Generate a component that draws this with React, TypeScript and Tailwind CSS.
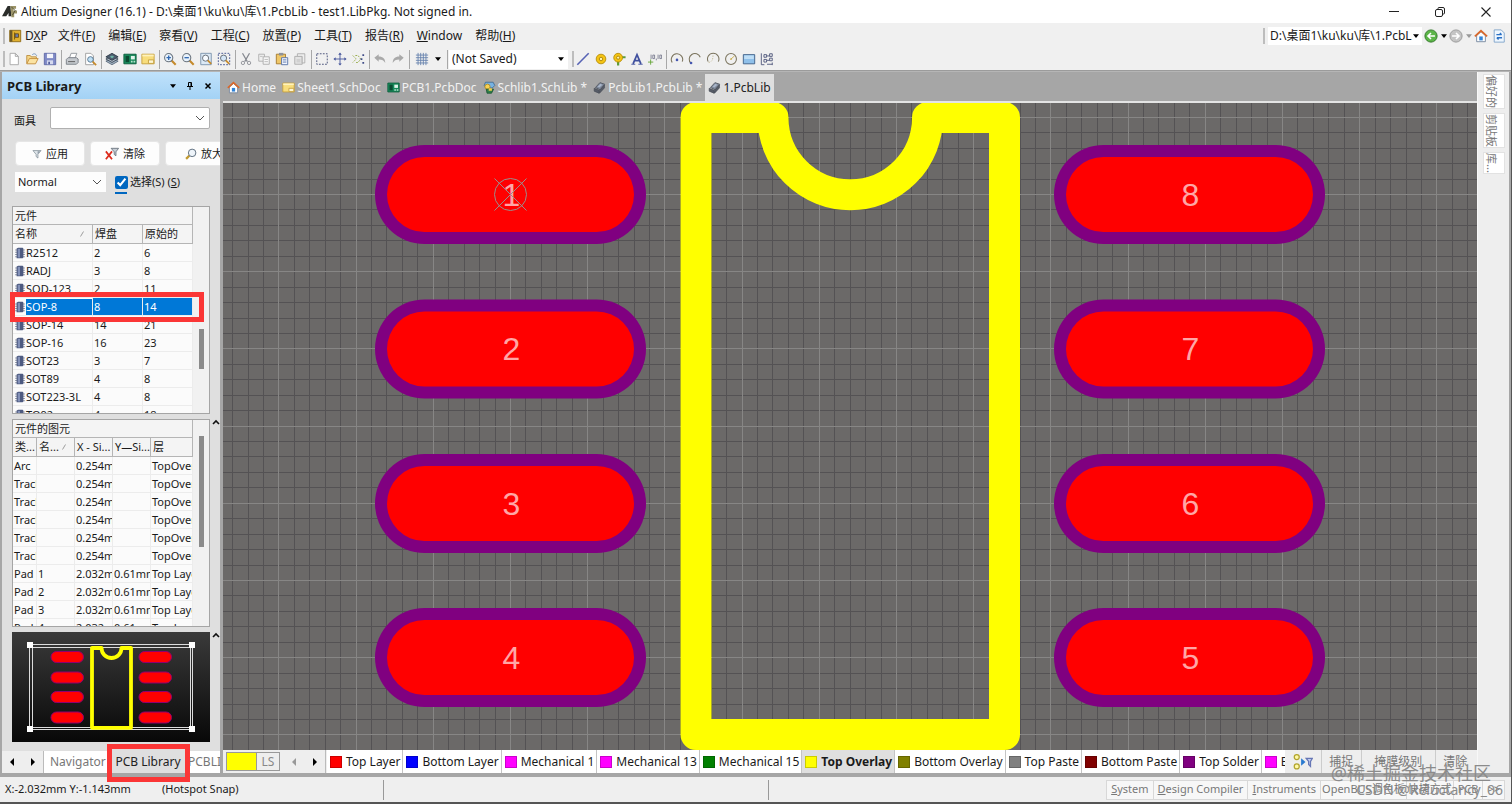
import { Fragment, useState } from "react";
import type { ReactNode } from "react";
import clsx from "clsx";

type IconName =
  | "new" | "open" | "save" | "print" | "preview" | "layers" | "pcb" | "sheet"
  | "zoomIn" | "zoomOut" | "zoomDoc" | "zoomArea" | "cut" | "copy" | "paste" | "stamp"
  | "select" | "move" | "deselect" | "undo" | "redo" | "grid"
  | "line" | "pad" | "via" | "text" | "coord" | "arc1" | "arc2" | "arc3" | "circle" | "fill" | "array"
  | "home" | "schlib" | "pcblib" | "dxp" | "logo" | "back" | "forward" | "refresh"
  | "funnel" | "clear" | "magnify" | "chip" | "mask";

const magnifier = (sign: ReactNode) => (
  <>
    <path d="M9.500 9.500l5 5" stroke="#c58a2c" strokeWidth="2.400" />
    <circle cx="6.500" cy="6.500" r="4.700" fill="#e8f2fb" stroke="#6b747e" strokeWidth="1.200" />
    {sign}
  </>
);

const ICONS: Record<IconName, ReactNode> = {
  new: <path d="M3.500 1.500h6l3.500 3.500v9.500H3.500z M9.500 1.500V5H13" fill="#fff" stroke="#a3a3a3" />,
  open: (
    <>
      <path d="M2 13V4h4l1 1.500h6V8" fill="#f5d687" stroke="#b98b3e" />
      <path d="M2 13.500l3-6h10l-3 6z" fill="#fbe3a2" stroke="#c28a37" />
      <path d="M8 3.500c2-2.500 4.500-1.500 5.500 1" stroke="#6d8fb8" />
    </>
  ),
  save: (
    <>
      <path d="M1.500 1.500h13v13h-13z" fill="#7f8ac6" stroke="#5d67a5" />
      <path d="M4.500 2h7v5h-7z" fill="#f3f4fb" />
      <path d="M4.500 9.500h7v4.500h-7z" fill="#d5d9ee" />
      <path d="M6 11h2v3H6z" fill="#555f9c" />
    </>
  ),
  print: (
    <>
      <path d="M5 7l2-5.500h6.500l-2 5.500z" fill="#fff" stroke="#8a8f96" />
      <path d="M1.500 8.500l2-2h9.500L15 8v4l-2 2H1.500z" fill="#c4c8cd" stroke="#767c84" />
      <path d="M3.500 11h8" stroke="#555" />
    </>
  ),
  preview: (
    <>
      <path d="M3 1.500h6l3 3v10H3z" fill="#fff" stroke="#9a9a9a" />
      <circle cx="8.500" cy="8.500" r="3.200" fill="#bfe0f5" stroke="#4e6f8c" />
      <path d="M11 11l4 4" stroke="#c58a2c" strokeWidth="2" />
    </>
  ),
  layers: (
    <>
      <path d="M1 10.500L8 14.500l7-4-7-4z" fill="#9fb0c1" stroke="#5b6a7a" />
      <path d="M1 8L8 12l7-4-7-4z" fill="#aab6c3" stroke="#3c4856" />
      <path d="M1 5.500L8 9.500l7-4-7-4z" fill="#4e5e70" stroke="#2e3946" />
      <path d="M5.500 5.500L8 4l2.500 1.500L8 7z" fill="#6fb6a8" />
    </>
  ),
  pcb: (
    <>
      <path d="M1 2.500h14v11H1z" fill="#17895a" stroke="#0c5c3b" />
      <path d="M3 4.500h4v7H3z" fill="#0b4a31" />
      <path d="M9 4.500h4.500v4H9z" fill="#dff3ea" />
      <path d="M9 10h2v2H9z M12 10h2v2h-2z" fill="#b6e3cd" />
    </>
  ),
  sheet: (
    <>
      <path d="M1 2.500h14v11H1z" fill="#f8dd7c" stroke="#c49d3a" />
      <path d="M1.500 3h13v2h-13z" fill="#fff2bd" />
      <path d="M8.500 9h6v4h-6z" fill="#fff6d2" stroke="#c49d3a" />
    </>
  ),
  zoomIn: magnifier(<path d="M4 6.500h5M6.500 4v5" stroke="#2f67b1" strokeWidth="1.500" />),
  zoomOut: magnifier(<path d="M4 6.500h5" stroke="#2f67b1" strokeWidth="1.500" />),
  zoomDoc: (
    <>
      <path d="M2 1.500h12v13H2z" fill="#dce9f5" stroke="#7790a9" />
      <circle cx="7.500" cy="7" r="3.500" fill="#f7fbff" stroke="#59616b" />
      <path d="M10 9.500l4 4" stroke="#c58a2c" strokeWidth="2" />
    </>
  ),
  zoomArea: (
    <>
      <path d="M1.500 1.500h13v13h-13z" stroke="#37498a" strokeDasharray="2 1.500" />
      <circle cx="7.500" cy="7" r="3.500" fill="#d4e6f7" stroke="#59616b" />
      <path d="M10 9.500l4 4" stroke="#c58a2c" strokeWidth="2" />
    </>
  ),
  cut: (
    <>
      <path d="M4 1.500l5.500 9.500M12 1.500L6.500 11" stroke="#85888f" strokeWidth="1.400" />
      <circle cx="4.500" cy="12.500" r="1.900" stroke="#8b8e95" />
      <circle cx="11.500" cy="12.500" r="1.900" stroke="#8b8e95" />
    </>
  ),
  copy: (
    <>
      <path d="M2 2.500h6.500v8H2z" fill="#f0f0f0" stroke="#aaa" />
      <path d="M7 5.500h7v8.500H7z" fill="#f7f7f7" stroke="#aaa" />
      <path d="M3.500 5h3M8.500 8.500h4M8.500 11h4" stroke="#b7b7b7" />
    </>
  ),
  paste: (
    <>
      <path d="M1.500 2.500h10.500v11H1.500z" fill="#efc768" stroke="#a2772a" />
      <path d="M4.500 1h5v3h-5z" fill="#8e9299" />
      <path d="M7.500 6.500h7v8h-7z" fill="#f2f6ff" stroke="#5470a6" />
      <path d="M9 9h4M9 11.500h4" stroke="#5470a6" />
    </>
  ),
  stamp: (
    <>
      <path d="M2 5h8.500v9H2z" fill="#e3e3e3" stroke="#aaa" />
      <path d="M5 2h8.500v10.500H10.500V5H5z" fill="#eee" stroke="#aaa" />
      <path d="M4 8h4.500v4H4z" fill="#d0d0d0" />
    </>
  ),
  select: <path d="M2 2h12v12H2z" stroke="#3c4570" strokeDasharray="2 1.500" />,
  move: (
    <>
      <path d="M8 2v12M2 8h12" stroke="#44549a" />
      <path d="M8 .5l2 2.500H6zM8 15.500l2-2.500H6zM.500 8L3 6v4zM15.500 8L13 6v4z" fill="#44549a" />
    </>
  ),
  deselect: (
    <>
      <path d="M2 4l4 4-4 4M5 4h3l3 4-3 4H5" stroke="#8fa53a" strokeDasharray="2 1.300" />
      <path d="M13 2.500h2v2h-2zM11 7h2v2h-2zM13 11.500h2v2h-2z" fill="#3f4c87" />
    </>
  ),
  undo: <path d="M1.500 6.500l5-4v2.500c5 0 7.500 2.500 7.500 7.500-1.500-2.800-3.500-4-7.500-4V11z" fill="#a9a9a9" />,
  redo: <path d="M14.500 6.500l-5-4v2.500C4.500 5 2 7.500 2 12.500c1.500-2.800 3.500-4 7.500-4V11z" fill="#a9a9a9" />,
  grid: <path d="M1 3.500h14M1 6.500h14M1 9.500h14M1 12.500h14M3.500 1v14M6.500 1v14M9.500 1v14M12.500 1v14" stroke="#6580ad" />,
  line: <path d="M1.500 14.500l13-13" stroke="#5763b5" strokeWidth="1.800" />,
  pad: (
    <>
      <circle cx="8" cy="8" r="5.500" fill="#f5c413" stroke="#b48c0a" />
      <circle cx="8" cy="8" r="2" fill="#fff2a8" stroke="#a88106" />
    </>
  ),
  via: (
    <>
      <path d="M10 6h5.500M7 9v6.500" stroke="#5b9b3c" strokeWidth="2.500" />
      <circle cx="7" cy="6.500" r="5" fill="#f5c413" stroke="#b48c0a" />
      <circle cx="7" cy="6.500" r="1.800" fill="#fff2a8" stroke="#a88106" />
    </>
  ),
  text: (
    <>
      <path d="M3.500 13.500L8 3l4.500 10.500M5.500 9.800h5" stroke="#41519f" strokeWidth="2" />
      <path d="M1.500 14h4.500M9.500 14h5" stroke="#41519f" />
    </>
  ),
  coord: (
    <>
      <path d="M0 11.500h6M3 8.500v6" stroke="#61a332" />
      <path d="M3.500 3v5M5.500 3.500h2v4h-2zM9.500 7.500v2M11.500 3v5M13.500 3.500h2v4h-2z" stroke="#5c6078" strokeWidth=".8" />
    </>
  ),
  arc1: (
    <>
      <path d="M2.500 12A6.500 6.500 0 1 1 14 11" stroke="#7b745e" strokeWidth="1.200" />
      <circle cx="8" cy="9" r="1.500" fill="#4557b0" />
    </>
  ),
  arc2: (
    <>
      <path d="M3.500 13A6.500 6.500 0 1 1 14 6" stroke="#7b745e" strokeWidth="1.200" />
      <circle cx="3.500" cy="12.500" r="1.500" fill="#4557b0" />
    </>
  ),
  arc3: (
    <>
      <path d="M2.500 11A6.500 6.500 0 1 1 14 11" stroke="#7b745e" strokeWidth="1.200" />
      <path d="M3 12c4-1 5-3 5-9" stroke="#c0b890" strokeDasharray="1.500 1.500" />
    </>
  ),
  circle: (
    <>
      <circle cx="8" cy="8" r="6.200" stroke="#7b745e" strokeWidth="1.200" />
      <path d="M8 8l4-3.500" stroke="#c7a944" />
      <circle cx="8" cy="8" r="1" fill="#c7a944" />
    </>
  ),
  fill: (
    <>
      <path d="M1.500 3h13v10.500h-13z" fill="#8fc0ea" stroke="#3c5b85" />
      <path d="M2.500 4h11v4h-11z" fill="#bfdef6" />
    </>
  ),
  array: (
    <path
      d="M1.500 1.500v13H5M4.500 3h3v3h-3zM11 2h3v3h-3zM4.500 8.500h3v3h-3zM11 7h3v3h-3zM8 14h6M8 4.500h3M8 9.500h3M14 12v3"
      stroke="#4a5278"
    />
  ),
  home: (
    <>
      <path d="M3 7.500L8 3l5 4.500V14.500H3z" fill="#fdfdfd" stroke="#71839b" />
      <path d="M6 8.500h4V13H6z" fill="#2f83d8" />
      <path d="M1 8.500L8 2l7 6.500" stroke="#d9682b" strokeWidth="2" />
    </>
  ),
  schlib: (
    <>
      <path d="M3 1.500h9.500l2 4-3 3H4L1.500 5.500z" fill="#77b3e3" stroke="#3c688d" />
      <circle cx="5.500" cy="7" r="3.200" fill="#f7d254" stroke="#a7811c" />
      <path d="M4 10h9l-2.500 5H5z" fill="#2e7f4b" stroke="#1c5430" />
      <path d="M7 9h4v3H7z" fill="#f0cf4c" />
    </>
  ),
  pcblib: (
    <>
      <path d="M3 8l5.500-6 6 2-5.500 7z" fill="#7e8899" stroke="#4b515c" />
      <path d="M1.500 9l6 2.500V15l-6-2.500zM8 11.500l6-6.500v3.500L8 15z" fill="#565c67" stroke="#4b505a" />
      <path d="M5.500 7l3.500-3.500 2.500 1L8 8z" fill="#a9b6ca" />
    </>
  ),
  dxp: (
    <>
      <path d="M2 1.500h12.500v13H2z" fill="#e0b030" stroke="#8b6814" />
      <path d="M2 1.500h3v13H2z" fill="#6d5a2a" />
      <path d="M7.500 4v8M8 5.500h4v4H8z" fill="#6b7bb0" stroke="#6b4e0b" />
    </>
  ),
  logo: (
    <>
      <path d="M0 13L6 2h3l1 11H7V9.500L4.500 13z" fill="#2b2d2a" />
      <path d="M9 2h6v3h-3v2h4v3h-3v4h-3" fill="#9c9468" />
      <path d="M10 3l4 4-3 5" stroke="#525034" />
    </>
  ),
  back: (
    <>
      <circle cx="8" cy="8" r="7" fill="#5cb548" stroke="#2e7426" />
      <path d="M12.500 8H5M8 4.500L4.500 8 8 11.500" stroke="#fff" strokeWidth="1.800" />
    </>
  ),
  forward: (
    <>
      <circle cx="8" cy="8" r="7" fill="#c4c4c4" stroke="#969696" />
      <path d="M3.500 8H11M8 4.500L11.500 8 8 11.500" stroke="#fff" strokeWidth="1.800" />
    </>
  ),
  refresh: (
    <>
      <path d="M2.500 1h8l3.500 3.500V15H2.500z" fill="#eef6fe" stroke="#7ba0c7" />
      <path d="M5 6.500h6M9 4.500l2 2M11.500 10h-6M7.500 12l-2-2" stroke="#2a70c4" strokeWidth="1.500" />
    </>
  ),
  funnel: (
    <>
      <path d="M1.500 2.500h13L9.500 8.500V14.500L6.500 12V8.500z" fill="#dfe5ea" stroke="#6d7b87" />
      <path d="M9 3.500h4L9 8z" fill="#8d99a5" />
    </>
  ),
  clear: (
    <>
      <path d="M7 1.500h8.500L12.500 5.500V10l-2-1.500v-3z" fill="#c6ccd4" stroke="#68727d" />
      <path d="M1 5l7 9M8 5l-7 9" stroke="#dc2b1d" strokeWidth="2" />
    </>
  ),
  magnify: (
    <>
      <path d="M6 10l-4.500 4.500" stroke="#c29a30" strokeWidth="3" />
      <circle cx="9.500" cy="6.500" r="5" fill="#eef4fa" stroke="#5f6f80" strokeWidth="1.300" />
    </>
  ),
  chip: (
    <>
      <path d="M1.500 4h13M1.500 7h13M1.500 10h13M1.500 13h13" stroke="#8f94a3" strokeWidth="1.500" />
      <path d="M3.500 2l2-1h6l1 1v12l-1 1h-8z" fill="#4d5a80" />
      <path d="M5 2.500h3v11.500H5z" fill="#8391b8" />
    </>
  ),
  mask: (
    <>
      <circle cx="3" cy="4" r="2" fill="#fff9a6" stroke="#b1a42c" />
      <circle cx="3" cy="11.500" r="2" fill="#fff9a6" stroke="#b1a42c" />
      <path d="M6.500 5l3.500 3-3.500 3z" fill="#2a7ad0" />
      <path d="M10.500 5h5L14 7.500v4L12.500 10V7.500z" fill="#c0cdf0" stroke="#6676b5" />
    </>
  )
};

function Icon({ name, className = "size-4" }: { name: IconName; className?: string }) {
  return (
    <svg viewBox="0 0 16 16" fill="none" aria-hidden className={clsx("shrink-0", className)}>
      {ICONS[name]}
    </svg>
  );
}

function Caret({ className = "fill-black" }: { className?: string }) {
  return (
    <svg viewBox="0 0 8 5" aria-hidden className={clsx("h-1 w-1.5 shrink-0", className)}>
      <path d="M0 0h8L4 5z" />
    </svg>
  );
}

function SideArrow({ className = "fill-black" }: { className?: string }) {
  return (
    <svg viewBox="0 0 4 8" aria-hidden className={clsx("h-2 w-1 shrink-0", className)}>
      <path d="M0 0l4 4-4 4z" />
    </svg>
  );
}

function Chevron({ className = "h-2 w-2.5" }: { className?: string }) {
  return (
    <svg viewBox="0 0 10 6" fill="none" aria-hidden className={clsx("pointer-events-none shrink-0", className)}>
      <path d="M1 1l4 4 4-4" stroke="#555" />
    </svg>
  );
}

function SplitHandle() {
  return (
    <svg viewBox="0 0 8 6" fill="none" aria-hidden className="h-1.5 w-2 shrink-0">
      <path d="M1 5l3-3 3 3" stroke="#111" strokeWidth="1.600" />
    </svg>
  );
}

const MENUS = [
  ["文件", "F"],
  ["编辑", "E"],
  ["察看", "V"],
  ["工程", "C"],
  ["放置", "P"],
  ["工具", "T"],
  ["报告", "R"]
];

const STANDARD_TOOLS: IconName[][] = [
  ["new", "open", "save"],
  ["print", "preview"],
  ["layers", "pcb", "sheet"],
  ["zoomIn", "zoomOut", "zoomDoc", "zoomArea"],
  ["cut", "copy", "paste", "stamp"],
  ["select", "move", "deselect"],
  ["undo", "redo"]
];

const PLACE_TOOLS: IconName[][] = [
  ["line", "pad", "via", "text", "coord"],
  ["arc1", "arc2", "arc3", "circle", "fill", "array"]
];

const DOCS: Array<{ icon: IconName; label: string }> = [
  { icon: "home", label: "Home" },
  { icon: "sheet", label: "Sheet1.SchDoc" },
  { icon: "pcb", label: "PCB1.PcbDoc" },
  { icon: "schlib", label: "Schlib1.SchLib *" },
  { icon: "pcblib", label: "PcbLib1.PcbLib *" },
  { icon: "pcblib", label: "1.PcbLib" }
];

const COMPONENTS: Array<[string, number, number]> = [
  ["R2512", 2, 6],
  ["RADJ", 3, 8],
  ["SOD-123", 2, 11],
  ["SOP-8", 8, 14],
  ["SOP-14", 14, 21],
  ["SOP-16", 16, 23],
  ["SOT23", 3, 7],
  ["SOT89", 4, 8],
  ["SOT223-3L", 4, 8],
  ["TO92", 4, 18]
];

const TRACK = ["Track", "", "0.254mm", "", "TopOverlay"];
const PRIMITIVES = [
  ["Arc", "", "0.254mm", "", "TopOverlay"],
  TRACK,
  TRACK,
  TRACK,
  TRACK,
  TRACK,
  ["Pad", "1", "2.032mm", "0.61mm", "Top Layer"],
  ["Pad", "2", "2.032mm", "0.61mm", "Top Layer"],
  ["Pad", "3", "2.032mm", "0.61mm", "Top Layer"],
  ["Pad", "4", "2.032mm", "0.61mm", "Top Layer"]
];

const LAYERS = [
  { name: "Top Layer", color: "bg-[#ff0000]" },
  { name: "Bottom Layer", color: "bg-[#0000ff]" },
  { name: "Mechanical 1", color: "bg-[#ff00ff]" },
  { name: "Mechanical 13", color: "bg-[#ff00ff]" },
  { name: "Mechanical 15", color: "bg-[#008000]" },
  { name: "Top Overlay", color: "bg-[#ffff00]" },
  { name: "Bottom Overlay", color: "bg-[#808000]" },
  { name: "Top Paste", color: "bg-[#808080]" },
  { name: "Bottom Paste", color: "bg-[#800000]" },
  { name: "Top Solder", color: "bg-[#800080]" }
];

// Pad positions in canvas units, pad 1 first and then counter-clockwise
const PADS = [
  { n: 1, x: 287.5, y: 91.5 },
  { n: 2, x: 287.5, y: 246 },
  { n: 3, x: 287.5, y: 400.5 },
  { n: 4, x: 287.5, y: 554.5 },
  { n: 5, x: 966.5, y: 554.5 },
  { n: 6, x: 966.5, y: 400.5 },
  { n: 7, x: 966.5, y: 246 },
  { n: 8, x: 966.5, y: 91.5 }
];

const CANVAS_W = 1254;
const CANVAS_H = 647;
const GRID_STEP = 15.44;

// Grid lines counted from pad 1; every fifth one is a major line
function gridPath(major: boolean) {
  let d = "";
  for (let k = -20; k < 70; k++) {
    if ((k % 5 === 0) !== major) continue;
    const x = Math.round(287 + k * GRID_STEP) + 0.5;
    const y = Math.round(91 + k * GRID_STEP) + 0.5;
    if (x > 0 && x < CANVAS_W) d += `M${x} 0V${CANVAS_H}`;
    if (y > 0 && y < CANVAS_H) d += `M0 ${y}H${CANVAS_W}`;
  }
  return d;
}

function Separator() {
  return (
    <span className="flex h-full w-1 justify-center">
      <span className="w-px bg-[#a8a8a8]" />
    </span>
  );
}

function Grip() {
  return <span className="h-4 w-0.5 shrink-0 bg-[#bdbdbd]" />;
}

function ToolGroups({ groups }: { groups: IconName[][] }) {
  return (
    <>
      {groups.map((group, i) => (
        <Fragment key={i}>
          {i > 0 && <Separator />}
          {group.map((name) => (
            <button key={name} type="button" aria-label={name} className="flex w-[18px] justify-center">
              <Icon name={name} className="size-3.5" />
            </button>
          ))}
        </Fragment>
      ))}
    </>
  );
}

function TitleBar() {
  return (
    <header className="flex h-[23px] shrink-0 items-center bg-white pl-0.5 text-[12px]">
      <Icon name="logo" className="mr-1 size-[15px]" />
      <h1>Altium Designer (16.1) - D:\桌面1\ku\ku\库\1.PcbLib - test1.LibPkg. Not signed in.</h1>
      <div className="ml-auto flex pr-0.5">
        <button type="button" aria-label="Minimize" className="flex w-[46px] justify-center">
          <svg viewBox="0 0 12 12" fill="none" className="size-3">
            <path d="M1 5.500h10" stroke="#222" />
          </svg>
        </button>
        <button type="button" aria-label="Restore" className="flex w-[46px] justify-center">
          <svg viewBox="0 0 12 12" fill="none" className="size-3">
            <rect x="1.500" y="3.500" width="7" height="7" rx="1.500" stroke="#222" />
            <path d="M4 3V2.500Q4 1.500 5 1.500h4q1.500 0 1.500 1.500v4q0 1-1 1H9" stroke="#222" />
          </svg>
        </button>
        <button type="button" aria-label="Close" className="flex w-[46px] justify-center">
          <svg viewBox="0 0 12 12" fill="none" className="size-3">
            <path d="M1.500 1.500l9 9M10.500 1.500l-9 9" stroke="#222" strokeWidth="1.100" />
          </svg>
        </button>
      </div>
    </header>
  );
}

function MenuBar() {
  return (
    <nav className="flex h-[25px] shrink-0 items-center pl-[3px] text-[12px]">
      <Grip />
      <Icon name="dxp" className="ml-[3px] mr-[3px] size-3.5" />
      <button type="button">
        D<u>X</u>P
      </button>
      <div className="ml-2.5 flex gap-[13px]">
        {MENUS.map(([label, key]) => (
          <button key={key} type="button">
            {label}(<u>{key}</u>)
          </button>
        ))}
        <button type="button">
          <u>W</u>indow
        </button>
        <button type="button">
          帮助(<u>H</u>)
        </button>
      </div>
      <div className="ml-auto flex items-center pr-[5px]">
        <Grip />
        <button type="button" className="ml-[3px] flex h-[18px] w-[154px] items-center bg-white pl-0.5 pr-[3px]">
          <span className="w-[142px] overflow-hidden whitespace-nowrap text-left">D:\桌面1\ku\ku\库\1.PcbLib</span>
          <span className="ml-auto flex">
            <Caret />
          </span>
        </button>
        <button type="button" aria-label="Back" className="ml-0.5 flex items-center gap-[3px]">
          <Icon name="back" className="size-3.5" />
          <Caret />
        </button>
        <button type="button" aria-label="Forward" className="ml-0.5 flex items-center gap-[3px]">
          <Icon name="forward" className="size-3.5" />
          <Caret className="fill-[#999]" />
        </button>
        <button type="button" aria-label="Home" className="ml-0.5">
          <Icon name="home" className="size-3.5" />
        </button>
        <button type="button" aria-label="Refresh" className="ml-1">
          <Icon name="refresh" className="size-3.5" />
        </button>
      </div>
    </nav>
  );
}

function ToolBar() {
  return (
    <div className="flex h-[23px] shrink-0 items-center border-b border-[#9b9b9b] pl-[3px]">
      <Grip />
      <div className="flex h-[19px] items-center">
        <ToolGroups groups={STANDARD_TOOLS} />
        <Separator />
        <button type="button" aria-label="Snap grid" className="flex w-[34px] items-center gap-1.5 pl-1">
          <Icon name="grid" className="size-3.5" />
          <Caret />
        </button>
        <Separator />
      </div>
      <div className="relative mr-1 flex h-[19px] w-[119px] items-center bg-white">
        <select aria-label="Saved view" className="w-full appearance-none bg-transparent pl-[3px] text-[12px] outline-none">
          <option>(Not Saved)</option>
        </select>
        <span className="pointer-events-none absolute right-1">
          <Caret />
        </span>
      </div>
      <Grip />
      <div className="flex h-[19px] items-center">
        <ToolGroups groups={PLACE_TOOLS} />
      </div>
    </div>
  );
}

function ScrollThumb({ className }: { className: string }) {
  return (
    <div className="flex w-4 shrink-0 justify-center bg-[#f1f1f1]">
      <span className={clsx("w-[5px] bg-[#8b8b8b]", className)} />
    </div>
  );
}

const CAPTION = "h-[18px] border-b border-r border-[#b5b5b5] bg-[#f4f4f4] pl-0.5 text-left leading-[18px]";
const HEAD_CELL = "overflow-hidden whitespace-nowrap border-b border-r border-[#b5b5b5] pl-0.5 text-left font-normal";
const BODY_CELL = "overflow-hidden whitespace-nowrap border-b border-r border-[#ececec] pl-px";

function SortMark() {
  return (
    <svg viewBox="0 0 4 6" fill="none" aria-hidden className="h-1.5 w-1">
      <path d="M.5 5.500l3-5" stroke="#888" strokeWidth=".8" />
    </svg>
  );
}

function ComponentTable({ selected, onSelect }: { selected: string; onSelect: (name: string) => void }) {
  return (
    <div className="flex h-[208px] overflow-hidden border border-[#a5a5a5] bg-[#fbfbfb]">
      <div className="min-w-0 flex-1">
        <table className="w-full table-fixed border-separate border-spacing-0">
          <caption className={CAPTION}>元件</caption>
          <colgroup>
            <col className="w-20" />
            <col className="w-[50px]" />
            <col />
          </colgroup>
          <thead className="bg-[#f4f4f4]">
            <tr className="h-[19px]">
              <th className={HEAD_CELL}>
                <span className="flex items-center justify-between pr-2">
                  名称 <SortMark />
                </span>
              </th>
              <th className={HEAD_CELL}>焊盘</th>
              <th className={HEAD_CELL}>原始的</th>
            </tr>
          </thead>
          <tbody>
            {COMPONENTS.map(([name, pads, prims]) => {
              const fill = name === selected ? "bg-[#0078d7] text-white" : "";
              return (
                <tr key={name} className="h-[18px]" onClick={() => onSelect(name)}>
                  <td className={BODY_CELL}>
                    <span className="flex items-center">
                      <Icon name="chip" className="size-3" />
                      <span className={clsx("flex-1", fill)}>{name}</span>
                    </span>
                  </td>
                  <td className={clsx(BODY_CELL, fill)}>{pads}</td>
                  <td className={clsx(BODY_CELL, fill)}>{prims}</td>
                </tr>
              );
            })}
          </tbody>
        </table>
      </div>
      <ScrollThumb className="mt-[122px] h-10" />
    </div>
  );
}

function PrimitiveTable() {
  return (
    <div className="flex h-[208px] overflow-hidden border border-[#a5a5a5] bg-[#fbfbfb]">
      <div className="min-w-0 flex-1">
        <table className="w-full table-fixed border-separate border-spacing-0">
          <caption className={CAPTION}>元件的图元</caption>
          <colgroup>
            <col className="w-6" />
            <col className="w-[38px]" />
            <col className="w-[38px]" />
            <col className="w-[38px]" />
            <col />
          </colgroup>
          <thead className="bg-[#f4f4f4]">
            <tr className="h-[19px]">
              <th className={HEAD_CELL}>类...</th>
              <th className={HEAD_CELL}>
                <span className="flex items-center justify-between pr-2">
                  名... <SortMark />
                </span>
              </th>
              <th className={HEAD_CELL}>X - Si...</th>
              <th className={HEAD_CELL}>Y—Si...</th>
              <th className={HEAD_CELL}>层</th>
            </tr>
          </thead>
          <tbody>
            {PRIMITIVES.map((row, i) => (
              <tr key={i} className="h-[18px]">
                {row.map((cell, j) => (
                  <td key={j} className={BODY_CELL}>
                    {cell}
                  </td>
                ))}
              </tr>
            ))}
          </tbody>
        </table>
      </div>
      <ScrollThumb className="mt-4 h-[111px]" />
    </div>
  );
}

function Preview() {
  return (
    <svg viewBox="0 0 198 110" role="img" aria-label="Footprint preview" className="block h-[110px] w-full">
      <defs>
        <linearGradient id="previewBg" x1="0" y1="0" x2="0" y2="1">
          <stop offset="0" stopColor="#3a3a3a" />
          <stop offset="1" stopColor="#080808" />
        </linearGradient>
      </defs>
      <rect width="198" height="110" fill="url(#previewBg)" />
      <path d="M18 12.500h162M18 15.500h162M18 95.500h162M18 97.500h162M17.500 12v86M20.500 12v86M178.500 12v86M180.500 12v86" stroke="#dcdcdc" />
      <path d="M15 10h6v6h-6zM177 10h6v6h-6zM15 94h6v6h-6zM177 94h6v6h-6z" fill="#fff" />
      {[25, 45.5, 65, 85.5].map((y) => (
        <g key={y} fill="#ff0000" stroke="#900070">
          <rect x="39" y={y - 5.5} width="32.500" height="11" rx="5.500" />
          <rect x="127" y={y - 5.5} width="32.500" height="11" rx="5.500" />
        </g>
      ))}
      <path
        d="M89.500 16H80v79.800h39V16h-9.500a10 10 0 0 1-20 0z"
        fill="none"
        stroke="#ffff00"
        strokeWidth="3.800"
        strokeLinejoin="round"
      />
    </svg>
  );
}

const PANEL_BUTTON = "flex h-[25px] w-[70px] shrink-0 items-center justify-center gap-1 rounded-sm border border-[#e6e6e6] bg-[#fdfdfd]";

function LibraryPanel() {
  const [selected, setSelected] = useState("SOP-8");
  const [mask, setMask] = useState("");
  const [pick, setPick] = useState(true);

  return (
    <aside className="relative ml-0.5 flex w-[218px] shrink-0 flex-col bg-[#dfdfdf] text-[11px] leading-4">
      <div className="flex h-[27px] shrink-0 items-center bg-linear-to-b from-[#c0e2fb] to-[#a3d2f5] pl-[5px] pr-2">
        <h2 className="text-[13px] font-bold">PCB Library</h2>
        <div className="ml-auto flex items-center gap-2.5">
          <button type="button" aria-label="Panel menu">
            <Caret />
          </button>
          <button type="button" aria-label="Pin">
            <svg viewBox="0 0 8 8" className="size-2" fill="none">
              <path d="M1 4.500h6M4 4.500V8M2.500 4V.5h3V4M5 1v3" stroke="#000" />
            </svg>
          </button>
          <button type="button" aria-label="Close panel">
            <svg viewBox="0 0 8 8" className="size-2" fill="none">
              <path d="M1.500 1.500l5 5M6.500 1.500l-5 5" stroke="#000" strokeWidth="1.500" />
            </svg>
          </button>
        </div>
      </div>

      <div className="flex flex-1 flex-col pl-2.5">
        <div className="mt-2 flex items-center">
          <label htmlFor="mask" className="w-[38px] pl-0.5 pt-1.5">
            面具
          </label>
          <div className="flex h-[22px] w-40 items-center rounded-xs border border-[#b0b0b0] bg-white pr-1">
            <input
              id="mask"
              value={mask}
              onChange={(e) => setMask(e.target.value)}
              className="min-w-0 flex-1 bg-transparent px-1 outline-none"
            />
            <Chevron />
          </div>
        </div>

        <div className="mt-3 flex gap-[5px] overflow-hidden pl-[3px]">
          <button type="button" className={PANEL_BUTTON}>
            <Icon name="funnel" className="size-2.5" /> 应用
          </button>
          <button type="button" className={PANEL_BUTTON}>
            <Icon name="clear" className="size-3.5" /> 清除
          </button>
          <button type="button" className={clsx(PANEL_BUTTON, "pl-2")}>
            <Icon name="magnify" className="size-3" /> 放大
          </button>
        </div>

        <div className="mt-1.5 flex items-center pl-[3px]">
          <div className="relative flex h-5 w-[91px] items-center bg-[#fdfdfd]">
            <select aria-label="Mode" className="w-full appearance-none bg-transparent pl-[3px] outline-none">
              <option>Normal</option>
            </select>
            <span className="pointer-events-none absolute right-1 flex">
              <Chevron />
            </span>
          </div>
          <label className="relative ml-[9px] flex items-center gap-0.5 whitespace-nowrap">
            <input
              type="checkbox"
              checked={pick}
              onChange={(e) => setPick(e.target.checked)}
              className="size-[13px] accent-[#0067c0]"
            />
            <span>
              选择(S) (<u>S</u>)
            </span>
            <span className="absolute -bottom-1 left-0 h-0.5 w-3 bg-[#0067c0]" />
          </label>
        </div>

        <div className="mt-3.5 w-[198px]">
          <ComponentTable selected={selected} onSelect={setSelected} />
        </div>
        <div className="mt-[5px] flex w-[208px] items-start gap-0.5">
          <div className="w-[198px] shrink-0">
            <PrimitiveTable />
          </div>
          <SplitHandle />
        </div>
        <div className="mt-[5px] flex w-[208px] items-start gap-0.5">
          <div className="w-[198px] shrink-0">
            <Preview />
          </div>
          <SplitHandle />
        </div>
      </div>

      <div className="flex h-[22px] shrink-0 overflow-hidden whitespace-nowrap text-[12px] text-[#777]">
        <button type="button" aria-label="Previous panel" className="flex w-5 shrink-0 items-center justify-center bg-[#eee]">
          <SideArrow className="rotate-180 fill-black" />
        </button>
        <button
          type="button"
          aria-label="Next panel"
          className="flex w-[22px] shrink-0 items-center justify-center border-r border-[#bbb] bg-[#eee]"
        >
          <SideArrow />
        </button>
        <button type="button" className="w-[66px] shrink-0 bg-white pl-1.5 text-left">
          Navigator
        </button>
        <button type="button" className="w-[76px] shrink-0 bg-[#dfdfdf] text-[#222]">
          PCB Library
        </button>
        <button type="button" className="flex-1 overflow-hidden bg-white pl-0.5 text-left">
          PCBLIB
        </button>
      </div>

      {/* callouts around the selected part and the active panel tab */}
      <span className="pointer-events-none absolute left-2 top-[220px] z-10 h-[30px] w-[194px] border-[5px] border-[#fb3636]" />
      <span className="pointer-events-none absolute -bottom-[9px] left-[105px] z-10 h-[38px] w-[83px] border-[5px] border-[#fb3636]" />
    </aside>
  );
}

function PcbCanvas() {
  return (
    <svg
      viewBox={`0 0 ${CANVAS_W} ${CANVAS_H}`}
      preserveAspectRatio="xMidYMid slice"
      role="img"
      aria-label="SOP-8 footprint"
      className="absolute inset-0 h-full w-full bg-[#6b6968]"
    >
      <path d={gridPath(false)} stroke="#545254" fill="none" />
      <path d={gridPath(true)} stroke="#878685" fill="none" />
      {PADS.map((p) => (
        <g key={p.n}>
          <rect x={p.x - 135.5} y={p.y - 49.5} width="271" height="99" rx="49.500" fill="#800080" />
          <rect x={p.x - 123.5} y={p.y - 37.5} width="247" height="75" rx="37.500" fill="#ff0000" />
          <text x={p.x + 1} y={p.y + 11} textAnchor="middle" fontSize="32" fill="#ffa6a6" className="font-['Liberation_Sans',sans-serif]">
            {p.n}
          </text>
        </g>
      ))}
      <g stroke="#9a8f8c" fill="none">
        <circle cx="287.500" cy="91.500" r="16" />
        <path d="M271.500 75.500l32 32M303.500 75.500l-32 32" />
      </g>
      <path
        d="M550 14.500H473V631.500H781.500V14.500H704.500A77.200 77.200 0 0 1 550 14.500Z"
        fill="none"
        stroke="#ffff00"
        strokeWidth="31"
        strokeLinejoin="round"
      />
    </svg>
  );
}

function DocumentTabs() {
  const [active, setActive] = useState("1.PcbLib");
  return (
    <div className="flex h-[31px] shrink-0 overflow-hidden border-b-2 border-[#e4e4e4] bg-[#a6a6a6] pl-px pt-0.5 text-[12px]">
      {DOCS.map((doc) => (
        <button
          key={doc.label}
          type="button"
          onClick={() => setActive(doc.label)}
          className={clsx(
            "flex items-center gap-0.5 whitespace-nowrap px-[3px]",
            doc.label === active ? "bg-[#dfdfdf] text-[#222]" : "text-[#f2f2f2]"
          )}
        >
          <Icon name={doc.icon} className="size-[13px]" />
          {doc.label}
        </button>
      ))}
    </div>
  );
}

function LayerTabs() {
  const [active, setActive] = useState("Top Overlay");
  return (
    <div className="flex h-[23px] shrink-0 overflow-hidden whitespace-nowrap bg-[#eee] text-[12px]">
      <div className="my-0.5 ml-[3px] flex w-[54px] shrink-0 border border-[#999] text-[#888]">
        <span className="w-[30px] border-r border-[#999] bg-[#ffff00]" />
        <span className="flex-1 text-center leading-[18px]">LS</span>
      </div>
      <button type="button" aria-label="Scroll layers left" className="ml-1 flex w-5 shrink-0 items-center justify-center">
        <SideArrow className="rotate-180 fill-[#999]" />
      </button>
      <button
        type="button"
        aria-label="Scroll layers right"
        className="flex w-[22px] shrink-0 items-center justify-center border-r border-[#bbb]"
      >
        <SideArrow />
      </button>
      <div className="flex shrink-0 pl-px">
        {LAYERS.map((layer) => (
          <button
            key={layer.name}
            type="button"
            onClick={() => setActive(layer.name)}
            className={clsx(
              "flex shrink-0 items-center gap-1 border-r border-[#c4c4c4] pl-[3px] pr-0.5",
              layer.name === active ? "bg-[#dfdfdf] font-bold" : "bg-white"
            )}
          >
            <span className={clsx("size-3 border border-black/20", layer.color)} />
            {layer.name}
          </button>
        ))}
      </div>
      <button type="button" className="flex w-[23px] shrink-0 items-center gap-1 overflow-hidden bg-white pl-[3px]">
        <span className="size-3 shrink-0 border border-black/20 bg-[#ff00ff]" />
        Bottom Solder
      </button>
      <div className="flex flex-1 text-[#777]">
        <button type="button" aria-label="Mask" className="flex w-9 shrink-0 items-center justify-center">
          <Icon name="mask" className="size-5" />
        </button>
        <button type="button" className="w-10 shrink-0 border-l border-[#ccc]">捕捉</button>
        <button type="button" className="w-[74px] shrink-0 border-l border-[#ccc]">掩膜级别</button>
        <button type="button" className="w-10 shrink-0 border-l border-[#ccc]">清除</button>
      </div>
    </div>
  );
}

function RightDock() {
  return (
    <div className="flex w-8 shrink-0 flex-col items-center gap-1 border-l border-[#f8f8f8] bg-[#eee] pt-0.5 text-[11px] text-[#777]">
      {["偏好的", "剪贴板", "库..."].map((label) => (
        <button
          key={label}
          type="button"
          className="w-[22px] border border-[#e2e2e2] bg-white py-[3px] text-[11px] leading-5 [text-orientation:sideways] [writing-mode:vertical-rl]"
        >
          {label}
        </button>
      ))}
    </div>
  );
}

function StatusBar() {
  return (
    <footer className="relative flex h-[27px] shrink-0 items-center whitespace-nowrap border-b-2 border-[#555] bg-[#efefef] text-[11px]">
      <div className="flex h-5 w-[384px] shrink-0 items-center border-r border-[#999] pl-[5px]">
        <span className="w-[157px]">X:-2.032mm Y:-1.143mm</span>
        <span>(Hotspot Snap)</span>
      </div>
      <div className="h-5 w-[385px] border-r border-[#999]" />
      <div className="ml-auto mr-1.5 flex h-5 border border-[#d8d8d8] bg-[#f7f7f7] text-[#777]">
        <button type="button" className="px-1"><u>S</u>ystem</button>
        <button type="button" className="border-l border-[#d8d8d8] px-1"><u>D</u>esign Compiler</button>
        <button type="button" className="border-l border-[#d8d8d8] px-1"><u>I</u>nstruments</button>
        <button type="button" className="border-l border-[#d8d8d8] px-px">OpenBUS调色板</button>
        <button type="button" className="border-l border-[#d8d8d8] px-px">快捷方式</button>
        <button type="button" className="border-l border-[#d8d8d8] px-1">PCB</button>
        <button type="button" className="border-l border-[#d8d8d8] px-1">&gt;&gt;</button>
      </div>
      {/* watermark */}
      <div className="pointer-events-none absolute bottom-1 right-2 flex flex-col items-end text-[#8b8b8b]">
        <span className="pr-3 text-[18px] leading-[18px]">@稀土掘金技术社区</span>
        <span className="text-[14px] leading-4">CSDN @Reluctancy_06</span>
      </div>
    </footer>
  );
}

export default function App() {
  return (
    <div className="flex h-screen flex-col overflow-hidden border-r border-[#555] bg-[#f0f0f0] font-['Noto_Sans','Noto_Sans_CJK_SC',sans-serif] text-[#1a1a1a]">
      <TitleBar />
      <MenuBar />
      <ToolBar />
      <div className="flex min-h-0 flex-1 border-t border-[#b5b5b5] bg-[#a6a6a6] pb-1 pr-0.5">
        <LibraryPanel />
        <main className="ml-[3px] flex min-w-0 flex-1 flex-col">
          <DocumentTabs />
          <div className="relative min-h-0 flex-1">
            <PcbCanvas />
          </div>
          <LayerTabs />
        </main>
        <RightDock />
      </div>
      <StatusBar />
    </div>
  );
}
